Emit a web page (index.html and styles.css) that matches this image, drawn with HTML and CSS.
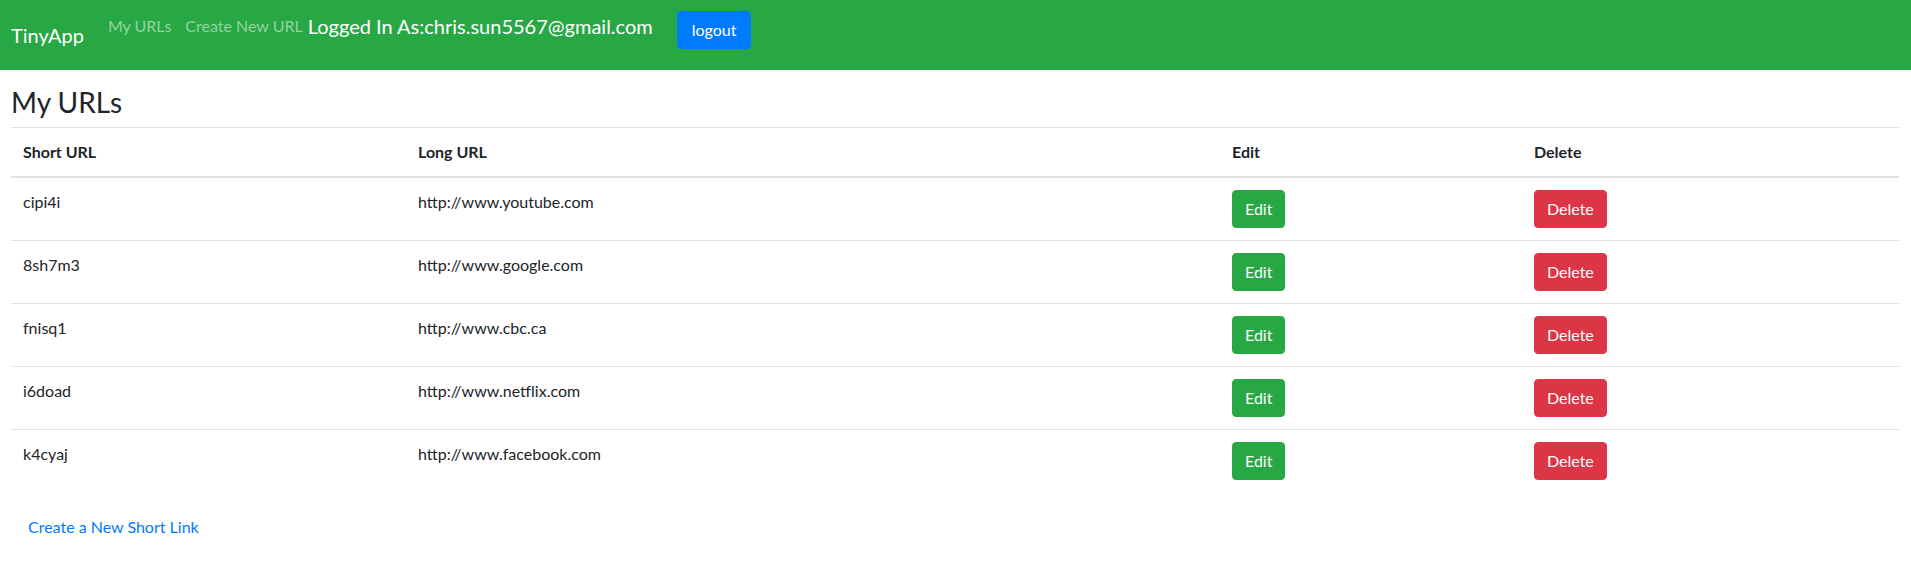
FILE: index.html
```html
<!DOCTYPE html>
<html lang="en">
<head>
<meta charset="utf-8">
<title>TinyApp - My URLs</title>
<link rel="stylesheet" href="styles.css">
</head>
<body>
<nav class="navbar">
  <a class="brand" href="#">TinyApp</a>
  <ul class="nav-links">
    <li><a class="nav-link" href="#">My URLs</a></li>
    <li><a class="nav-link" href="#">Create New URL</a></li>
  </ul>
  <div class="user">
    <span class="user-label">Logged In As:chris.sun5567@gmail.com</span>
    <button class="btn btn-logout" type="button">logout</button>
  </div>
</nav>
<main class="content">
  <h3 class="page-title">My URLs</h3>
  <table class="url-table">
    <colgroup>
      <col class="col-short">
      <col class="col-long">
      <col class="col-edit">
      <col class="col-delete">
    </colgroup>
    <thead>
      <tr><th>Short URL</th><th>Long URL</th><th>Edit</th><th>Delete</th></tr>
    </thead>
    <tbody>
      <tr><td>cipi4i</td><td>http://www.youtube.com</td><td><button class="btn btn-edit" type="button">Edit</button></td><td><button class="btn btn-delete" type="button">Delete</button></td></tr>
      <tr><td>8sh7m3</td><td>http://www.google.com</td><td><button class="btn btn-edit" type="button">Edit</button></td><td><button class="btn btn-delete" type="button">Delete</button></td></tr>
      <tr><td>fnisq1</td><td>http://www.cbc.ca</td><td><button class="btn btn-edit" type="button">Edit</button></td><td><button class="btn btn-delete" type="button">Delete</button></td></tr>
      <tr><td>i6doad</td><td>http://www.netflix.com</td><td><button class="btn btn-edit" type="button">Edit</button></td><td><button class="btn btn-delete" type="button">Delete</button></td></tr>
      <tr><td>k4cyaj</td><td>http://www.facebook.com</td><td><button class="btn btn-edit" type="button">Edit</button></td><td><button class="btn btn-delete" type="button">Delete</button></td></tr>
    </tbody>
  </table>
  <p class="new-link"><a href="#">Create a New Short Link</a></p>
</main>
</body>
</html>
```
FILE: styles.css
```css
* { box-sizing: border-box; }

html, body {
  margin: 0;
  padding: 0;
  background: #ffffff;
}

body {
  font-family: Lato, "Noto Sans", "Liberation Sans", sans-serif;
  font-size: 16px;
  line-height: 24px;
  color: #212529;
}

a { text-decoration: none; }

.navbar {
  display: flex;
  align-items: flex-start;
  height: 70px;
  padding-left: 11px;
  background: #28a745;
}

.brand {
  margin-top: 20px;
  margin-right: 16px;
  font-size: 20px;
  line-height: 30px;
  color: #ffffff;
}

.nav-links {
  display: flex;
  list-style: none;
  margin: 14px 0 0 0;
  padding: 0;
}

.nav-link {
  display: block;
  padding: 0 8px;
  color: #94d3a2;
}

.nav-links li + li .nav-link {
  padding-left: 6px;
}

.user {
  display: flex;
  align-items: flex-start;
  margin-left: -3px;
  margin-top: 11px;
}

.user-label {
  font-size: 20px;
  line-height: 30px;
  color: #ffffff;
  margin-right: 24px;
}

.btn {
  display: inline-block;
  padding: 6px 12px;
  border: 1px solid transparent;
  border-radius: 4px;
  font-family: inherit;
  font-size: 16px;
  line-height: 24px;
  color: #ffffff;
  cursor: pointer;
}

.btn-logout { background: #007bff; border-color: #007bff; padding: 6px 14px; }
.btn-edit { background: #28a745; border-color: #28a745; }
.btn-delete { background: #dc3545; border-color: #dc3545; }

.content {
  padding: 0 12px 0 11px;
}

.page-title {
  margin: 15px 0 8px 0;
  font-size: 28px;
  line-height: 34px;
  font-weight: 400;
  color: #212529;
}

.url-table {
  width: 100%;
  table-layout: fixed;
  border-collapse: collapse;
}

.col-short { width: 395px; }
.col-long { width: 814px; }
.col-edit { width: 302px; }
.col-delete { width: auto; }

.url-table th,
.url-table td {
  padding: 12px;
  text-align: left;
  vertical-align: top;
  border-top: 1px solid #dee2e6;
}

.url-table th {
  font-weight: 700;
  border-bottom: 2px solid #dee2e6;
}

.new-link {
  margin: 23px 0 0 17px;
}

.new-link a { color: #007bff; }
```
